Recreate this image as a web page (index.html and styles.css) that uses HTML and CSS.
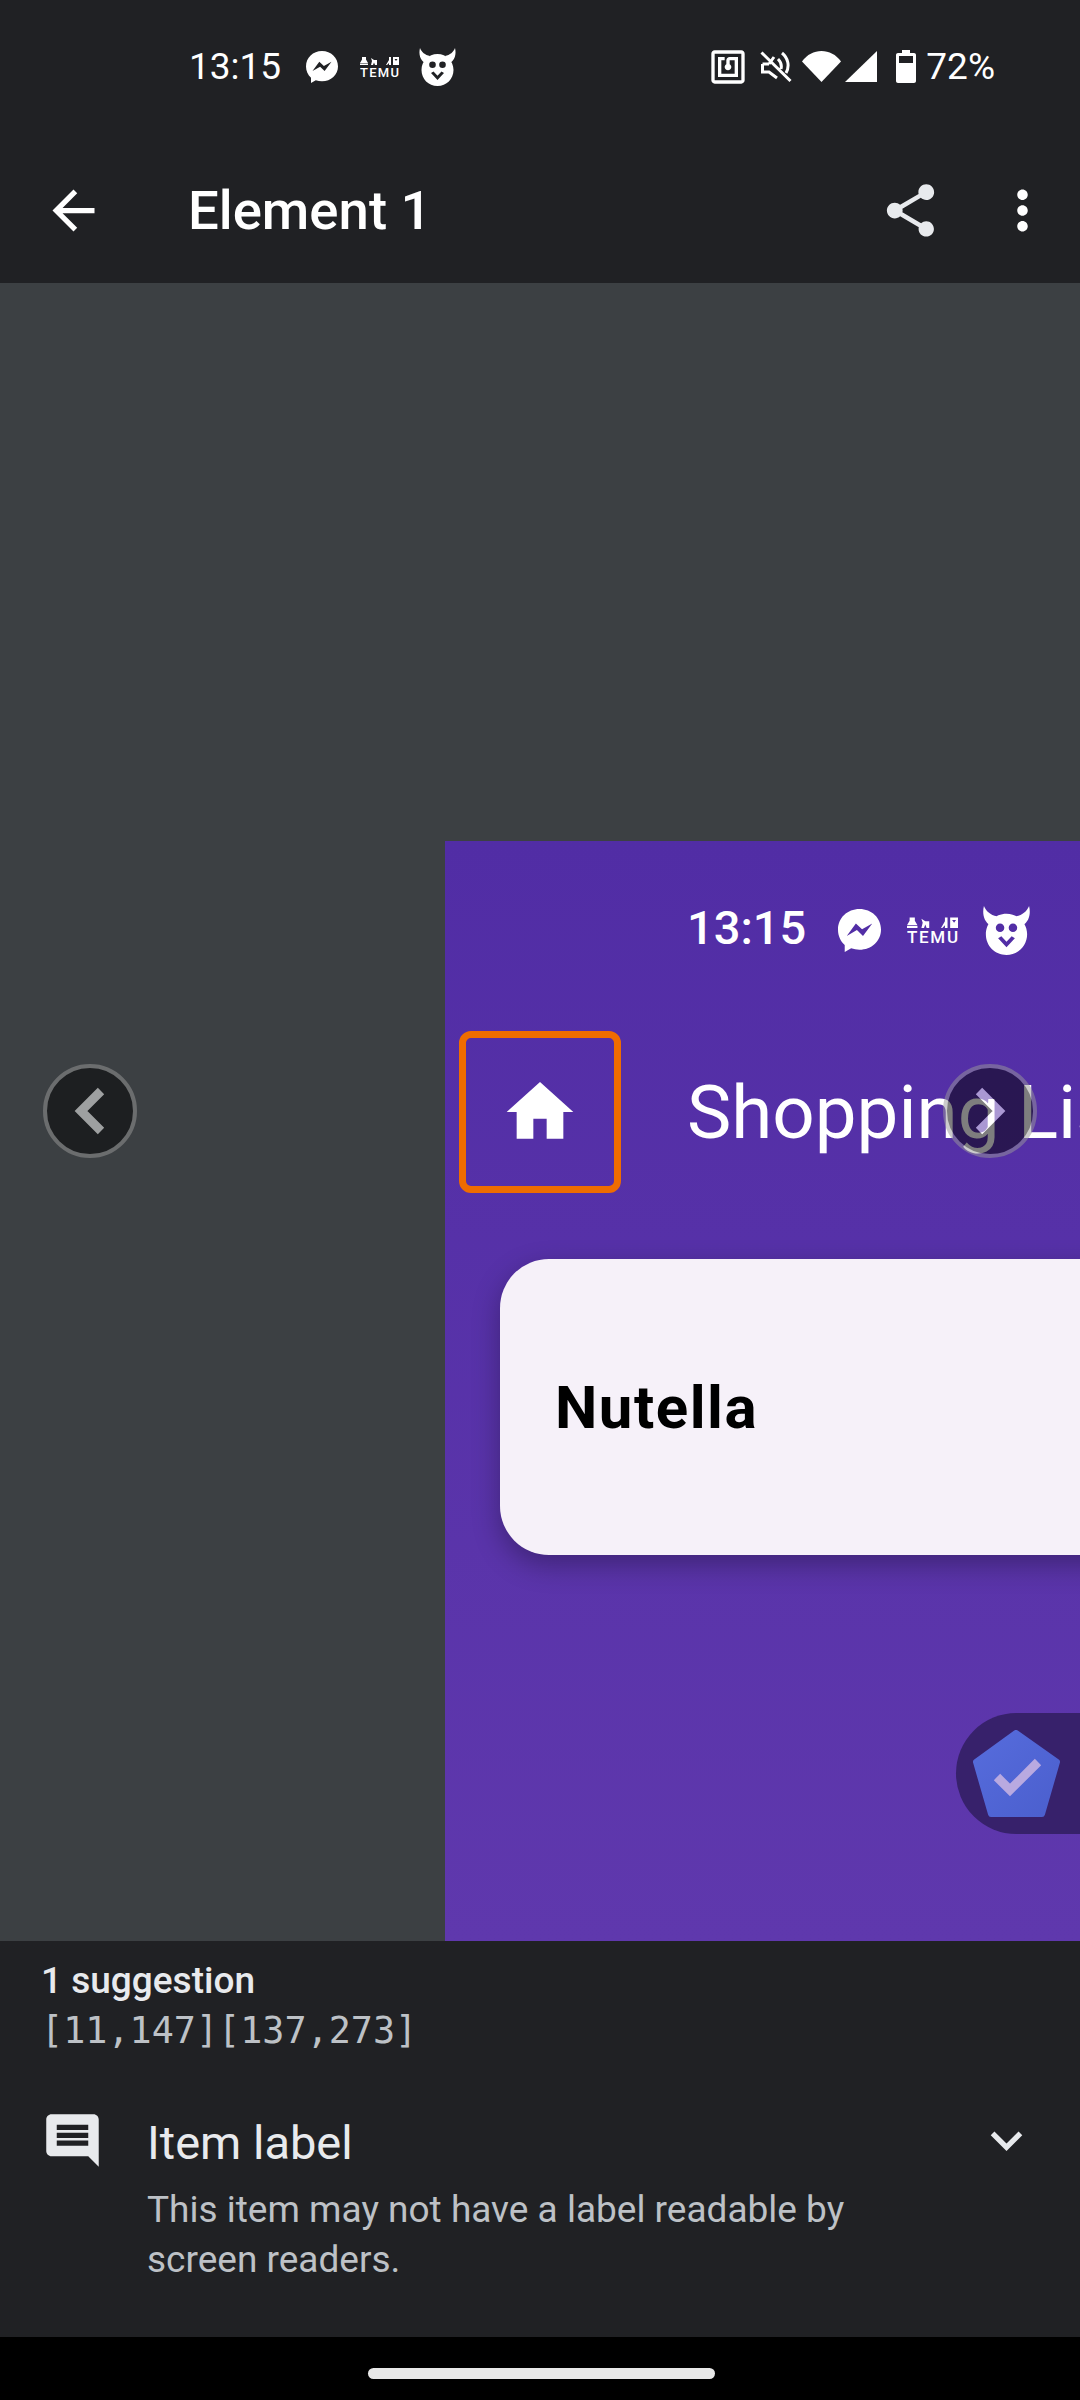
FILE: index.html
```html
<!DOCTYPE html>
<html lang="en">
<head>
<meta charset="utf-8">
<title>Element 1</title>
<link rel="stylesheet" href="styles.css">
</head>
<body>

<!-- shared icons -->
<svg class="sprite" xmlns="http://www.w3.org/2000/svg">
	<symbol id="i-messenger" viewBox="0 0 32 32">
		<path fill-rule="evenodd" d="M16 0C7 0 0 6.600 0 15.400c0 4.600 1.900 8.600 5 11.300V32l4.800-2.700c1.900.6 4 1 6.200 1 9 0 16-6.600 16-14.900C32 6.600 25 0 16 0zM6.500 20l6.800-9.200 4.600 4.200 7.600-4.300-6.900 9.300-4.500-4.300z"/>
	</symbol>
	<symbol id="i-temu" viewBox="0 0 39 20">
		<path d="M2 0h4v2.500l2 3.500h-8l2-3.500zM-0 6.500h8v1.500h-8zM11 1l3 2 3 0v5h-2l-1-2.500-1 2.500h-2l1-4zM23 8h3l3-5v-3h2v8h-2v-2l-2 2h-4zM33 0h6v8h-6zM34.500 2l1.500 2 1.500-2z"/>
		<text class="temu-text" x="0" y="19.500" textLength="39">TEMU</text>
	</symbol>
	<symbol id="i-devil" viewBox="0 0 39 38">
		<path d="M2 0C.5 6 2 12 7 15l5-7C7 7 3.500 4 2 0zM37 0c1.500 6 0 12-5 15l-5-7c5-1 8.500-4 10-8z"/>
		<path fill-rule="evenodd" d="M19.500 6C10.500 6 3.500 13 3.500 22s7 16 16 16 16-7 16-16-7-16-16-16zM14.500 13.500a3.300 3.300 0 1 0 0 6.600 3.300 3.300 0 0 0 0-6.600zM24.500 13.500a3.300 3.300 0 1 0 0 6.600 3.300 3.300 0 0 0 0-6.600zM13 25l6.500 7 6.500-7-2.500-1.500-4 4.200-4-4.200z"/>
	</symbol>
	<symbol id="i-nfc" viewBox="0 0 24 24">
		<path d="M20 2H4c-1.100 0-2 .9-2 2v16c0 1.100.9 2 2 2h16c1.100 0 2-.9 2-2V4c0-1.100-.9-2-2-2zm0 18H4V4h16v16zM18 6h-5c-1.100 0-2 .9-2 2v2.280c-.6.35-1 .98-1 1.720 0 1.100.9 2 2 2s2-.9 2-2c0-.74-.4-1.380-1-1.720V8h3v8H8V8h2V6H6v12h12V6z"/>
	</symbol>
	<symbol id="i-mute" viewBox="0 0 32 32">
		<path d="M1.500 1.500L30.500 30M2.500 13H9M2.500 13v8H9l8 6M14 6L9 13M18 8c3 3 4 6 3 10M22 2c6 5 8 13 4 20" fill="none" stroke="currentColor" stroke-width="3"/>
	</symbol>
	<symbol id="i-home" viewBox="0 0 24 24">
		<path d="M10 20v-6h4v6h5v-8h3L12 3 2 12h3v8z"/>
	</symbol>
</svg>

<div class="screen">

	<!-- status bar -->
	<div class="status">
		<span class="status-time">13:15</span>
		<svg class="ic-messenger"><use href="#i-messenger"/></svg>
		<svg class="ic-temu"><use href="#i-temu"/></svg>
		<svg class="ic-devil"><use href="#i-devil"/></svg>
		<div class="status-right">
			<svg class="ic-nfc"><use href="#i-nfc"/></svg>
			<svg class="ic-mute"><use href="#i-mute"/></svg>
			<svg class="ic-wifi" viewBox="0 0 39 31"><path d="M19.500 31L0 10.500C5 3.500 12 0 19.500 0S34 3.500 39 10.500z"/></svg>
			<svg class="ic-signal" viewBox="0 0 32 31"><path d="M32 0v31H0z"/></svg>
			<svg class="ic-battery" viewBox="0 0 20 33"><path fill-rule="evenodd" d="M6 0h8v3h4c1.100 0 2 .9 2 2v26c0 1.100-.9 2-2 2H2c-1.100 0-2-.9-2-2V5c0-1.100.9-2 2-2h4zM3 6v7h14V6z"/></svg>
			<span class="status-pct">72%</span>
		</div>
	</div>

	<!-- toolbar -->
	<div class="toolbar">
		<svg class="icon-63" viewBox="0 0 24 24"><path d="M20 11H7.830l5.590-5.590L12 4l-8 8 8 8 1.410-1.410L7.830 13H20v-2z"/></svg>
		<h1 class="toolbar-title">Element 1</h1>
		<svg class="icon-63 tint" viewBox="0 0 24 24"><path d="M18 16.080c-.76 0-1.440.3-1.960.77L8.910 12.700c.05-.23.09-.46.09-.7s-.04-.47-.09-.7l7.050-4.110c.54.5 1.250.81 2.040.81 1.660 0 3-1.340 3-3s-1.340-3-3-3-3 1.340-3 3c0 .24.04.47.09.7L8.040 9.810C7.500 9.310 6.790 9 6 9c-1.660 0-3 1.340-3 3s1.340 3 3 3c.79 0 1.500-.31 2.040-.81l7.120 4.160c-.05.21-.08.43-.08.65 0 1.610 1.310 2.920 2.920 2.920 1.610 0 2.920-1.310 2.920-2.920s-1.310-2.920-2.920-2.920z"/></svg>
		<svg class="icon-63 more" viewBox="0 0 24 24"><path d="M12 8c1.100 0 2-.9 2-2s-.9-2-2-2-2 .9-2 2 .9 2 2 2zm0 2c-1.100 0-2 .9-2 2s.9 2 2 2 2-.9 2-2-.9-2-2-2zm0 6c-1.100 0-2 .9-2 2s.9 2 2 2 2-.9 2-2-.9-2-2-2z"/></svg>
	</div>

	<!-- screenshot preview -->
	<div class="preview">
		<div class="shot">
			<div class="shot-status">
				<span class="shot-time">13:15</span>
				<svg class="shot-messenger"><use href="#i-messenger"/></svg>
				<svg class="shot-temu"><use href="#i-temu"/></svg>
				<svg class="shot-devil"><use href="#i-devil"/></svg>
			</div>
			<div class="shot-bar">
				<div class="highlight">
					<svg class="shot-home"><use href="#i-home"/></svg>
				</div>
				<span class="shot-title">Shopping List</span>
			</div>
			<div class="card">Nutella</div>
			<div class="scanner-pill">
				<svg class="scanner-logo" viewBox="0 0 87 87">
					<defs>
						<linearGradient id="penta" x1="0" y1="0" x2="1" y2="1">
							<stop offset="0" stop-color="#566cdc"/>
							<stop offset="1" stop-color="#4b5fce"/>
						</linearGradient>
					</defs>
					<path d="M43 3L84 32 69 84H18L3 32z" fill="url(#penta)" stroke="url(#penta)" stroke-width="6" stroke-linejoin="round"/>
					<path d="M24 47L37 60 65 32" fill="none" stroke="#b9a9e0" stroke-width="9"/>
				</svg>
			</div>
		</div>

		<div class="nav-btn nav-prev">
			<svg viewBox="0 0 86 86"><path d="M54 23L34 43 54 63" fill="none" stroke="#fff" stroke-width="9"/></svg>
		</div>
		<div class="nav-btn nav-next">
			<svg viewBox="0 0 86 86"><path d="M32 23L52 43 32 63" fill="none" stroke="#fff" stroke-width="9"/></svg>
		</div>
	</div>

	<!-- suggestions -->
	<div class="panel">
		<div class="panel-count">1 suggestion</div>
		<div class="panel-bounds">[11,147][137,273]</div>
		<div class="item">
			<svg class="icon-63 tint" viewBox="0 0 24 24"><path d="M21.990 4c0-1.100-.89-2-1.990-2H4c-1.100 0-2 .9-2 2v12c0 1.100.9 2 2 2h14l4 4-.01-18zM18 14H6v-2h12v2zm0-3H6V9h12v2zm0-3H6V6h12v2z"/></svg>
			<div class="item-text">
				<div class="item-title">Item label</div>
				<div class="item-desc">This item may not have a label readable by screen readers.</div>
			</div>
			<svg class="icon-63 tint" viewBox="0 0 24 24"><path d="M16.590 8.590L12 13.170 7.410 8.590 6 10l6 6 6-6z"/></svg>
		</div>
	</div>

	<!-- gesture bar -->
	<div class="gesture">
		<div class="gesture-handle"></div>
	</div>

</div>
</body>
</html>
```

FILE: styles.css
```css
body {
	margin: 0;
	background: #000;
	font-family: Roboto, "Noto Sans", sans-serif;
	color: #fff;
}

svg {
	display: block;
	flex: none;
	fill: currentColor;
}

.sprite {
	display: none;
}

.temu-text {
	font: 500 13px Roboto, sans-serif;
}

.screen {
	width: 1080px;
	height: 2400px;
	display: flex;
	flex-direction: column;
	overflow: hidden;
}

/* status bar */
.status {
	height: 133px;
	flex: none;
	box-sizing: border-box;
	padding: 0 85px 0 189px;
	background: #202124;
	display: flex;
	align-items: center;
}

.status-time {
	font-size: 37px;
	line-height: 44px;
	width: 117px;
}

.ic-messenger {
	width: 32px;
	height: 32px;
	margin-right: 22px;
}

.ic-temu {
	width: 39px;
	height: 20px;
	margin-right: 19px;
}

.ic-devil {
	width: 39px;
	height: 38px;
}

.status-right {
	margin-left: auto;
	display: flex;
	align-items: center;
}

.ic-nfc {
	width: 40px;
	height: 40px;
	margin: 0 12px 0 -4px;
}

.ic-mute {
	width: 32px;
	height: 32px;
	margin-right: 10px;
}

.ic-wifi {
	width: 39px;
	height: 31px;
	margin-right: 4px;
}

.ic-signal {
	width: 32px;
	height: 31px;
	margin-right: 19px;
}

.ic-battery {
	width: 20px;
	height: 33px;
	margin-right: 10px;
}

.status-pct {
	font-size: 37px;
	line-height: 44px;
}

/* toolbar */
.toolbar {
	height: 150px;
	flex: none;
	box-sizing: border-box;
	padding: 4px 26px 0 42px;
	background: #202124;
	display: flex;
	align-items: center;
}

.icon-63 {
	width: 63px;
	height: 63px;
}

.tint {
	color: #e8eaed;
}

.more {
	margin-left: 49px;
}

.toolbar-title {
	margin: 0 auto 0 83px;
	font-size: 54.5px;
	font-weight: 500;
	line-height: 64px;
}

/* preview */
.preview {
	position: relative;
	flex: 1;
	background: #3c4043;
	display: flex;
	align-items: flex-end;
	justify-content: flex-end;
}

.shot {
	position: relative;
	width: 635px;
	height: 1100px;
	overflow: hidden;
	background: linear-gradient(#512da5, #5f38ad);
}

.shot-status {
	height: 178px;
	box-sizing: border-box;
	padding-left: 242px;
	display: flex;
	align-items: center;
}

.shot-time {
	margin-bottom: 5px;
	font-size: 47px;
	font-weight: 500;
	width: 151px;
}

.shot-messenger {
	width: 43px;
	height: 43px;
	margin-right: 26px;
}

.shot-temu {
	width: 51px;
	height: 27px;
	margin-right: 23px;
}

.shot-devil {
	width: 51px;
	height: 49px;
}

.shot-bar {
	margin: 12px 0 66px 14px;
	display: flex;
	align-items: center;
	white-space: nowrap;
}

.highlight {
	flex: none;
	width: 162px;
	height: 162px;
	box-sizing: border-box;
	border: 7px solid #ef6c00;
	border-radius: 12px;
	display: flex;
	align-items: center;
	justify-content: center;
}

.shot-home {
	width: 80px;
	height: 80px;
}

.shot-title {
	margin-left: 66px;
	font-size: 74.5px;
}

.card {
	width: 800px;
	height: 296px;
	margin-left: 55px;
	box-sizing: border-box;
	padding-left: 55px;
	background: #f6f1f9;
	border-radius: 49px;
	box-shadow: 0 10px 28px rgba(0, 0, 0, 0.3);
	color: #000;
	font-size: 60px;
	font-weight: 700;
	letter-spacing: 1.5px;
	display: flex;
	align-items: center;
}

.scanner-pill {
	position: absolute;
	left: 511px;
	top: 872px;
	width: 200px;
	height: 121px;
	box-sizing: border-box;
	padding-left: 17px;
	border-radius: 61px;
	background: #37216b;
	display: flex;
	align-items: center;
}

.scanner-logo {
	width: 87px;
	height: 87px;
}

/* prev and next buttons float over the preview */
.nav-btn {
	position: absolute;
	top: 781px;
	width: 94px;
	height: 94px;
	box-sizing: border-box;
	border: 4px solid #9a9a9a;
	border-radius: 50%;
	background: #000;
	opacity: 0.5;
}

.nav-btn svg {
	width: 86px;
	height: 86px;
}

.nav-prev {
	left: 43px;
}

.nav-next {
	left: 943px;
}

/* suggestions */
.panel {
	height: 396px;
	flex: none;
	box-sizing: border-box;
	padding: 15px 42px 0 41px;
	background: #202124;
}

.panel-count {
	font-size: 37px;
	font-weight: 500;
	line-height: 50px;
	color: #e8eaed;
}

.panel-bounds {
	font-family: "DejaVu Sans Mono", monospace;
	font-size: 36.75px;
	line-height: 50px;
	color: #bdc1c6;
}

.item {
	margin-top: 53px;
	display: flex;
	align-items: flex-start;
}

.item-text {
	flex: 1;
	margin: 4px 0 0 43px;
}

.item-title {
	font-size: 47px;
	line-height: 60px;
	color: #e8eaed;
}

.item-desc {
	max-width: 720px;
	margin-top: 12px;
	font-size: 37px;
	line-height: 50px;
	color: #bdc1c6;
}

/* gesture bar */
.gesture {
	height: 63px;
	flex: none;
	background: #000;
	display: flex;
	justify-content: center;
	padding: 31px 0 0 3px;
	box-sizing: border-box;
}

.gesture-handle {
	width: 347px;
	height: 11px;
	border-radius: 6px;
	background: #e8e8e8;
}
```
